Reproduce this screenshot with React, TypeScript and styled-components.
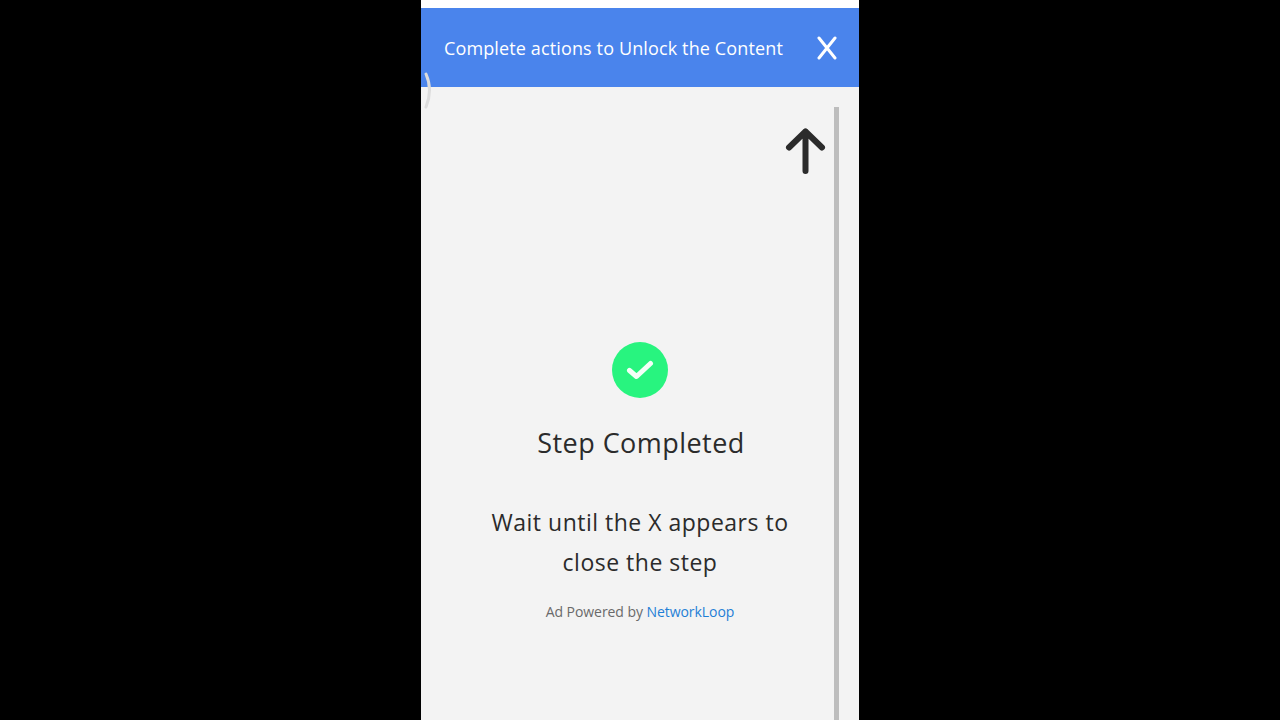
import { FC } from 'react';
import styled, { createGlobalStyle } from 'styled-components';

const GlobalStyle = createGlobalStyle`
    html, body {
        margin: 0;
        height: 100%;
        background: #000;
    }
    #root {
        height: 100%;
    }
`
const Page = styled.div`
    height: 720px;
    display: flex;
    justify-content: center;
    background: #000;
    font-family: "Comic Sans MS", "Open Sans", "DejaVu Sans", sans-serif;
    overflow: hidden;
`
const Phone = styled.div`
    position: relative;
    width: 438px;
    padding-top: 8px;
    display: flex;
    flex-direction: column;
    background: #fff;
`
const Header = styled.div`
    height: 79px;
    padding: 0 22px 0 23px;
    display: flex;
    align-items: center;
    justify-content: space-between;
    background: #4a84ec;
    color: #fff;
`
const HeaderTitle = styled.span`
    font-size: 18px;
    letter-spacing: 0.13px;
`
const CloseIcon = styled.svg`
    width: 20px;
    height: 24px;
    display: block;
`
const Body = styled.div`
    flex: 1;
    position: relative;
    display: flex;
    flex-direction: column;
    align-items: center;
    padding-top: 255px;
    background: #f3f3f3;
`
const Spinner = styled.svg`
    position: absolute;
    left: 3px;
    top: -15px;
    width: 9px;
    height: 37px;
`
const ScrollBar = styled.div`
    position: absolute;
    top: 20px;
    bottom: 0;
    left: 413px;
    width: 5px;
    background: #bdbdbd;
`
const UpArrow = styled.svg`
    position: absolute;
    top: 40px;
    left: 364px;
    width: 42px;
    height: 50px;
`
const CheckBadge = styled.div`
    width: 56px;
    height: 56px;
    border-radius: 50%;
    display: flex;
    align-items: center;
    justify-content: center;
    background: #28f47f;
`
const StepTitle = styled.h2`
    margin: 24px 0 0;
    font-size: 27px;
    line-height: 42px;
    font-weight: 400;
    color: #2b2b2b;
    letter-spacing: 0.45px;
    transform: translateX(1px);
`
const Message = styled.p`
    margin: 39px 0 0;
    width: 320px;
    font-size: 23px;
    line-height: 39.5px;
    text-align: center;
    color: #2b2b2b;
    letter-spacing: 0.5px;
`
const Powered = styled.div`
    margin-top: 20px;
    font-size: 14px;
    line-height: 20px;
    color: #6a6a6a;
    letter-spacing: -0.06px;
`
const PoweredLink = styled.span`
    color: #1f7fd6;
`

const App: FC = () => {
    return (
        <Page>
            <GlobalStyle/>
            <Phone>
                <Header>
                    <HeaderTitle>Complete actions to Unlock the Content</HeaderTitle>
                    <CloseIcon viewBox="0 0 20 24">
                        <path d="M2 2 L18 22 M18 2 L2 22" stroke="#fff" strokeWidth="3" strokeLinecap="round" fill="none"/>
                    </CloseIcon>
                </Header>
                <Body>
                    <Spinner viewBox="0 0 9 37">
                        <path d="M2 2 Q9 18 2 35" stroke="#dcdcdc" strokeWidth="3" strokeLinecap="round" fill="none"/>
                    </Spinner>
                    <ScrollBar/>
                    <UpArrow viewBox="0 0 42 50">
                        <path d="M20.5 44 V4.5 M4 20.5 L20.5 4.5 L37 20.5" stroke="#2b2b2b" strokeWidth="6" strokeLinecap="round" strokeLinejoin="round" fill="none"/>
                    </UpArrow>
                    <CheckBadge>
                        <svg width="28" height="22" viewBox="0 0 28 22">
                            <path d="M3.5 11.5 L10.5 17.5 L24.5 4.5" stroke="#f4fff8" strokeWidth="5" strokeLinecap="round" strokeLinejoin="round" fill="none"/>
                        </svg>
                    </CheckBadge>
                    <StepTitle>Step Completed</StepTitle>
                    <Message>Wait until the X appears to close the step</Message>
                    <Powered>Ad Powered by <PoweredLink>NetworkLoop</PoweredLink></Powered>
                </Body>
            </Phone>
        </Page>
    )
}

export default App;
